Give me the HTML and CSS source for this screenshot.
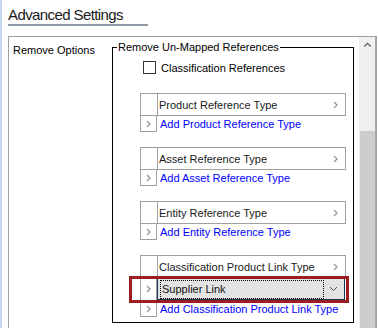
FILE: index.html
```html
<!DOCTYPE html>
<html lang="en">
<head>
    <meta charset="UTF-8">
    <title>Advanced Settings</title>
    <link rel="stylesheet" href="styles.css">
</head>
<body>
    <div class="page">
        <h1 class="title">Advanced Settings</h1>

        <div class="panel">
            <div class="panel-body">
                <div class="field-label">Remove Options</div>

                <fieldset class="group">
                    <legend>Remove Un-Mapped References</legend>

                    <label class="check">
                        <span class="check-box"></span>
                        Classification References
                    </label>

                    <div class="ref-list">
                        <div class="ref-head">
                            <span class="gap-cell"></span>
                            <span class="ref-name">Product Reference Type</span>
                            <svg class="chev" width="5" height="8" viewBox="0 0 5 8"><polyline points="1,1 4,4 1,7" /></svg>
                        </div>
                        <div class="ref-add">
                            <span class="add-cell"><svg class="chev" width="5" height="8" viewBox="0 0 5 8"><polyline points="1,1 4,4 1,7" /></svg></span>
                            <a class="add-link" href="#">Add Product Reference Type</a>
                        </div>
                    </div>

                    <div class="ref-list">
                        <div class="ref-head">
                            <span class="gap-cell"></span>
                            <span class="ref-name">Asset Reference Type</span>
                            <svg class="chev" width="5" height="8" viewBox="0 0 5 8"><polyline points="1,1 4,4 1,7" /></svg>
                        </div>
                        <div class="ref-add">
                            <span class="add-cell"><svg class="chev" width="5" height="8" viewBox="0 0 5 8"><polyline points="1,1 4,4 1,7" /></svg></span>
                            <a class="add-link" href="#">Add Asset Reference Type</a>
                        </div>
                    </div>

                    <div class="ref-list">
                        <div class="ref-head">
                            <span class="gap-cell"></span>
                            <span class="ref-name">Entity Reference Type</span>
                            <svg class="chev" width="5" height="8" viewBox="0 0 5 8"><polyline points="1,1 4,4 1,7" /></svg>
                        </div>
                        <div class="ref-add">
                            <span class="add-cell"><svg class="chev" width="5" height="8" viewBox="0 0 5 8"><polyline points="1,1 4,4 1,7" /></svg></span>
                            <a class="add-link" href="#">Add Entity Reference Type</a>
                        </div>
                    </div>

                    <div class="ref-list">
                        <div class="ref-head">
                            <span class="gap-cell"></span>
                            <span class="ref-name">Classification Product Link Type</span>
                            <svg class="chev" width="5" height="8" viewBox="0 0 5 8"><polyline points="1,1 4,4 1,7" /></svg>
                        </div>
                        <div class="ref-item">
                            <span class="item-cell"><svg class="chev" width="5" height="8" viewBox="0 0 5 8"><polyline points="1,1 4,4 1,7" /></svg></span>
                            <div class="combo">
                                <span class="combo-text">Supplier Link</span>
                                <svg class="combo-arrow" width="9" height="6" viewBox="0 0 9 6"><polyline points="1,1 4.5,4.5 8,1" /></svg>
                            </div>
                            <div class="highlight"></div>
                        </div>
                        <div class="ref-add">
                            <span class="add-cell"><svg class="chev" width="5" height="8" viewBox="0 0 5 8"><polyline points="1,1 4,4 1,7" /></svg></span>
                            <a class="add-link" href="#">Add Classification Product Link Type</a>
                        </div>
                    </div>
                </fieldset>
            </div>

            <div class="scrollbar">
                <svg class="sb-up" width="9" height="6" viewBox="0 0 9 6"><polyline points="1,5 4.5,1.5 8,5" /></svg>
                <div class="sb-thumb"></div>
            </div>
        </div>
    </div>
</body>
</html>
```

FILE: styles.css
```css
body {
    margin: 0;
    height: 328px;
    overflow: hidden;
    background: #fff;
    font-family: "Liberation Sans", Arial, sans-serif;
    font-size: 11px;
    color: #000;
}

.page {
    border-left: 2px solid #c3d7ef;
    padding-left: 6px;
    min-height: 328px;
}

/* Header */
.title {
    width: 140px;
    margin: 0;
    padding-top: 6px;
    font-size: 15px;
    font-weight: normal;
    line-height: 18px;
    color: #1b1b1b;
    letter-spacing: -0.6px;
    border-bottom: 2px solid #8e9aa6;
}

.panel {
    display: flex;
    height: 330px;
    margin: 10px 2px 0 0;
    border: 1px solid #a0a0a0;
    border-bottom: none;
}

.panel-body {
    flex: 1;
    display: flex;
    align-items: flex-start;
    padding-top: 5px;
}

.field-label {
    width: 99px;
    padding: 2px 0 0 4px;
    line-height: 13px;
}

/* Group box */
.group {
    width: 242px;
    box-sizing: border-box;
    margin: 0;
    padding: 0 7px 5px 27px;
    border: 1px solid #000;
}

.group legend {
    margin-left: -23px;
    padding: 0 1px;
    line-height: 11px;
}

.check {
    display: flex;
    align-items: center;
    gap: 5px;
    height: 13px;
    margin: 8px 0 19px 3px;
}

.check-box {
    width: 13px;
    height: 13px;
    box-sizing: border-box;
    border: 1px solid #333;
    background: #fff;
}

/* Reference lists */
.ref-list {
    width: 206px;
    margin-bottom: 15px;
}

.ref-list:last-child {
    margin-bottom: 0;
}

.ref-head {
    display: flex;
    align-items: center;
    height: 23px;
    box-sizing: border-box;
    border: 1px solid #a0a0a0;
}

.gap-cell {
    width: 16px;
    height: 100%;
    border-right: 1px solid #a0a0a0;
}

.ref-name {
    flex: 1;
    padding-left: 1px;
    color: #1a1a1a;
}

.ref-head .chev {
    margin-right: 7px;
}

.chev polyline {
    fill: none;
    stroke: #9a9a9a;
    stroke-width: 1.4;
}

.ref-add {
    display: flex;
    align-items: center;
    height: 16px;
}

.add-cell,
.item-cell {
    display: flex;
    align-items: center;
    justify-content: center;
    width: 17px;
    height: 16px;
    box-sizing: border-box;
    border: 1px solid #a0a0a0;
    border-top: none;
}

.add-link {
    padding-left: 3px;
    color: #0000ff;
    text-decoration: none;
}

/* Selected item row */
.ref-item {
    position: relative;
    display: flex;
    height: 23px;
}

.item-cell {
    height: 23px;
}

.combo {
    flex: 1;
    display: flex;
    align-items: center;
    margin: 0 1px 1px 0;
    padding: 0 6px 0 2px;
    background: #e3e3e3;
    border: 1px solid #1d3557;
}

.combo-text {
    flex: 1;
    margin-right: 5px;
    padding: 2px 1px;
    line-height: 13px;
    color: #111;
    border: 1px dotted #000;
}

.combo-arrow polyline {
    fill: none;
    stroke: #555;
    stroke-width: 1;
}

.highlight {
    position: absolute;
    left: -11px;
    top: -2px;
    width: 220px;
    height: 27px;
    box-sizing: border-box;
    border: 3px solid #9b1d22;
}

/* Scrollbar */
.scrollbar {
    display: flex;
    flex-direction: column;
    align-items: center;
    width: 16px;
    background: #f0f0f0;
    border-right: 1px solid #a8a8a8;
}

.sb-up {
    margin-top: 5px;
}

.sb-up polyline {
    fill: none;
    stroke: #606060;
    stroke-width: 1.5;
}

.sb-thumb {
    width: 15px;
    height: 260px;
    margin-top: 84px;
    background: #cdcdcd;
}
```
